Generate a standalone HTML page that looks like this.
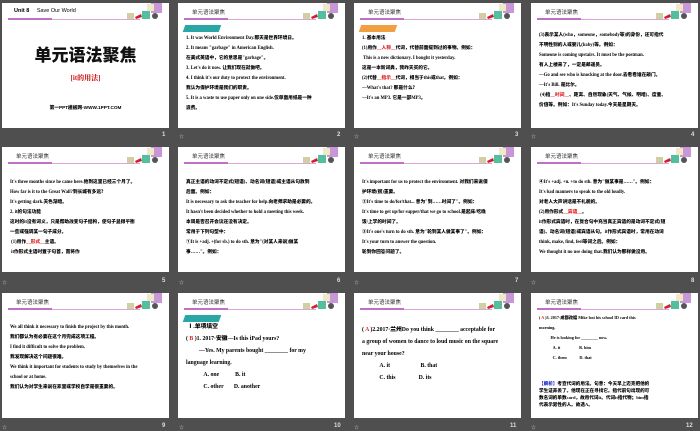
<!DOCTYPE html>
<html><head><meta charset="utf-8"><style>
*{margin:0;padding:0;box-sizing:border-box}
body{width:700px;height:431px;background:#4f4f4f;position:relative;overflow:hidden;font-family:"Liberation Serif","Noto Serif CJK SC",serif}
.s{position:absolute;width:167px;height:125px;background:#fff}
.h{position:absolute;left:14px;top:5px;font:5.5px "Liberation Sans","Noto Sans CJK SC",sans-serif;color:#333}
.l1{position:absolute;left:6px;top:16px;width:132px;height:1px;background:#d9a6d9}
.l2{position:absolute;left:6px;top:15px;width:44px;height:2px;background:#c070c8}
.ic{position:absolute;left:125px;top:0}
.n{position:absolute;color:#ddd;font:bold 6px "Liberation Sans",sans-serif}
.m{position:absolute;color:#bbb;font:5px "Noto Sans CJK SC",sans-serif}
.c{position:absolute;left:8px;right:6px;font-size:4.7px;font-weight:900;line-height:10px;color:#000;white-space:nowrap;font-family:"Liberation Serif","Noto Sans CJK SC",serif}
.r{color:#e02020}
.tag{position:absolute;left:6px;top:22px;width:36px;height:7px;background:#2aa6a6;transform:skewX(-20deg)}
</style></head><body>
<svg width="0" height="0" style="position:absolute"><defs><g id="ic"><rect x="24" y="0" width="11" height="10" fill="#c897d8"/><rect x="20" y="1" width="7" height="7" fill="#f3e8c6"/><rect x="0" y="10" width="7" height="6" fill="#cfcf9f"/><path d="M8 14l6-3 1 3-6 2z" fill="#d02030"/><rect x="15" y="8" width="8" height="8" fill="#52bfa0"/><circle cx="28" cy="13" r="3" fill="#555"/></g></defs></svg>

<div class="s" style="left:2px;top:3px">
<div style="position:absolute;left:12px;top:5px;font:bold 5.5px 'Liberation Sans',sans-serif">Unit 8 <span style="font-weight:normal;margin-left:6px">Save Our World</span></div>
<div class="l1"></div><div class="l2"></div><svg class="ic" width="40" height="18"><use href="#ic"/></svg>
<div style="position:absolute;left:0;right:0;top:38px;text-align:center;font:900 17px 'Noto Sans CJK SC',sans-serif;color:#111">单元语法聚焦</div>
<div style="position:absolute;left:0;right:0;top:70px;text-align:center;font:900 7px 'Liberation Serif','Noto Serif CJK SC',serif;color:#d02020">[it的用法]</div>
<div style="position:absolute;left:0;right:0;top:102px;text-align:center;font:900 4.7px 'Liberation Sans','Noto Sans CJK SC',sans-serif">第一PPT模板网-WWW.1PPT.COM</div>
</div><div class="n" style="left:162px;top:132px">1</div>

<div class="s" style="left:178px;top:3px"><div class="h">单元语法聚焦</div><div class="l1"></div><div class="l2"></div><svg class="ic" width="40" height="18"><use href="#ic"/></svg>
<div class="tag"></div>
<div class="c" style="top:31px">1. It was World Environment Day.那天是世界环境日。<br>2. It means "garbage" in American English.<br>在美式英语中，它的意思是"garbage"。<br>3. Let's do it now. 让我们现在就做吧。<br>4. I think it's our duty to protect the environment.<br>我认为保护环境是我们的职责。<br>5. It is a waste to use paper only on one side.仅单面用纸是一种<br>浪费。</div></div>
<div class="m" style="left:179px;top:133px">☆</div><div class="n" style="left:337px;top:132px">2</div>

<div class="s" style="left:354px;top:3px"><div class="h">单元语法聚焦</div><div class="l1"></div><div class="l2"></div><svg class="ic" width="40" height="18"><use href="#ic"/></svg>
<div class="tag" style="background:#f0a040"></div>
<div class="c" style="top:31px">1. 基本用法<br>(1)用作<span class="r">__人称__</span>代词，代替前面提到过的事物。例如：<br>&nbsp;This is a new dictionary. I bought it yesterday.<br>这是一本新词典，我昨天买的它。<br>(2)代替<span class="r">__指示__</span>代词，相当于this或that。例如：<br>—What's that? 那是什么？<br>—It's an MP3. 它是一部MP3。</div></div>
<div class="m" style="left:354px;top:133px">☆</div><div class="n" style="left:515px;top:132px">3</div>

<div class="s" style="left:531px;top:3px"><div class="h">单元语法聚焦</div><div class="l1"></div><div class="l2"></div><svg class="ic" width="40" height="18"><use href="#ic"/></svg>
<div class="c" style="top:28px">(3)表示某人(who，someone，somebody等)的身份，还可指代<br>不明性别的人或婴儿(baby)等。例如：<br>Someone is coming upstairs. It must be the postman.<br>有人上楼来了，一定是邮递员。<br>—Go and see who is knocking at the door.去看看谁在敲门。<br>—It's Bill. 是比尔。<br>&nbsp;(4)指<span class="r">__时间__</span>、距离、自然现象(天气、气候、明暗)、度量、<br>价值等。例如：It's Sunday today.今天是星期天。</div></div>
<div class="m" style="left:531px;top:133px">☆</div><div class="n" style="left:691px;top:132px">4</div>

<div class="s" style="left:2px;top:147px"><div class="h">单元语法聚焦</div><div class="l1"></div><div class="l2"></div><svg class="ic" width="40" height="18"><use href="#ic"/></svg>
<div class="c" style="top:31px">It's three months since he came here.他到这里已经三个月了。<br>How far is it to the Great Wall?到长城有多远？<br>It's getting dark.天色渐暗。<br>2. it的句法功能<br>这时的it没有词义，只是帮助改变句子结构，使句子显得平衡<br>一些或强调某一句子成分。<br>&nbsp;(1)用作<span class="r">__形式__</span>主语。<br>&nbsp;it作形式主语时置于句首，而将作</div></div>
<div class="m" style="left:2px;top:279px">☆</div><div class="n" style="left:162px;top:278px">5</div>

<div class="s" style="left:178px;top:147px"><div class="h">单元语法聚焦</div><div class="l1"></div><div class="l2"></div><svg class="ic" width="40" height="18"><use href="#ic"/></svg>
<div class="c" style="top:31px">真正主语的动词不定式(短语)、动名词(短语)或主语从句放到<br>后面。例如：<br>It is necessary to ask the teacher for help.向老师求助是必要的。<br>It hasn't been decided whether to hold a meeting this week.<br>本周是否召开会议还没有决定。<br>常用于下列句型中：<br>①It is +adj. +(for sb.) to do sth. 意为"(对某人来说)做某<br>事……"。例如：</div></div>
<div class="m" style="left:179px;top:279px">☆</div><div class="n" style="left:337px;top:278px">6</div>

<div class="s" style="left:354px;top:147px"><div class="h">单元语法聚焦</div><div class="l1"></div><div class="l2"></div><svg class="ic" width="40" height="18"><use href="#ic"/></svg>
<div class="c" style="top:31px">It's important for us to protect the environment. 对我们来说保<br>护环境(很)重要。<br>②It's time to do/for/that... 意为"到……时间了"。例如：<br>It's time to get up/for supper/that we go to school.是起床/吃晚<br>饭/上学的时间了。<br>③It's one's turn to do sth. 意为"轮到某人做某事了"。例如：<br>It's your turn to answer the question.<br>轮到你回答问题了。</div></div>
<div class="m" style="left:354px;top:279px">☆</div><div class="n" style="left:515px;top:278px">7</div>

<div class="s" style="left:531px;top:147px"><div class="h">单元语法聚焦</div><div class="l1"></div><div class="l2"></div><svg class="ic" width="40" height="18"><use href="#ic"/></svg>
<div class="c" style="top:31px">④It's +adj. +n. +to do sth. 意为"做某事是……"。例如：<br>It's bad manners to speak to the old loudly.<br>对老人大声讲话是不礼貌的。<br>(2)用作形式<span class="r">__宾语__</span>。<br>it作形式宾语时，在复合句中充当真正宾语的是动词不定式(短<br>语)、动名词(短语)或宾语从句。it作形式宾语时，常用在动词<br>think, make, find, feel等词之后。例如：<br>We thought it no use doing that.我们认为那样做没用。</div></div>
<div class="m" style="left:531px;top:279px">☆</div><div class="n" style="left:691px;top:278px">8</div>

<div class="s" style="left:2px;top:293px"><div class="h">单元语法聚焦</div><div class="l1"></div><div class="l2"></div><svg class="ic" width="40" height="18"><use href="#ic"/></svg>
<div class="c" style="top:30px">We all think it necessary to finish the project by this month.<br>我们都认为有必要在这个月完成这项工程。<br>I find it difficult to solve the problem.<br>我发现解决这个问题很难。<br>We think it important for students to study by themselves in the<br>school or at home.<br>我们认为对学生来说在家里或学校自学是很重要的。</div></div>
<div class="m" style="left:2px;top:424px">☆</div><div class="n" style="left:162px;top:423px">9</div>

<div class="s" style="left:178px;top:293px"><div class="h">单元语法聚焦</div><div class="l1"></div><div class="l2"></div><svg class="ic" width="40" height="18"><use href="#ic"/></svg>
<div class="tag"></div>
<div class="c" style="top:28px;font-size:5.8px;line-height:12px">&nbsp;Ⅰ.单项填空<br>( <span class="r">B</span> )1. 2017·安徽—Is this iPad yours?<br>&nbsp;&nbsp;&nbsp;&nbsp;&nbsp;&nbsp;&nbsp;&nbsp;&nbsp;—Yes. My parents bought ________ for my<br>language learning.<br>&nbsp;&nbsp;&nbsp;&nbsp;&nbsp;&nbsp;&nbsp;&nbsp;&nbsp;&nbsp;&nbsp;&nbsp;A. one&nbsp;&nbsp;&nbsp;&nbsp;&nbsp;&nbsp;&nbsp;&nbsp;&nbsp;&nbsp;&nbsp;B. it<br>&nbsp;&nbsp;&nbsp;&nbsp;&nbsp;&nbsp;&nbsp;&nbsp;&nbsp;&nbsp;&nbsp;&nbsp;C. other&nbsp;&nbsp;&nbsp;&nbsp;&nbsp;&nbsp;&nbsp;D. another</div></div>
<div class="m" style="left:179px;top:424px">☆</div><div class="n" style="left:334px;top:423px">10</div>

<div class="s" style="left:354px;top:293px"><div class="h">单元语法聚焦</div><div class="l1"></div><div class="l2"></div><svg class="ic" width="40" height="18"><use href="#ic"/></svg>
<div class="c" style="top:31px;font-size:5.8px;line-height:12px">( <span class="r">A</span> )2.2017·兰州Do you think ________ acceptable for<br>a group of women to dance to loud music on the square<br>near your house?<br>&nbsp;&nbsp;&nbsp;&nbsp;&nbsp;&nbsp;&nbsp;&nbsp;&nbsp;&nbsp;&nbsp;&nbsp;A. it&nbsp;&nbsp;&nbsp;&nbsp;&nbsp;&nbsp;&nbsp;&nbsp;&nbsp;&nbsp;&nbsp;&nbsp;&nbsp;&nbsp;&nbsp;&nbsp;&nbsp;&nbsp;&nbsp;&nbsp;&nbsp;B. that<br>&nbsp;&nbsp;&nbsp;&nbsp;&nbsp;&nbsp;&nbsp;&nbsp;&nbsp;&nbsp;&nbsp;&nbsp;C. this&nbsp;&nbsp;&nbsp;&nbsp;&nbsp;&nbsp;&nbsp;&nbsp;&nbsp;&nbsp;&nbsp;&nbsp;&nbsp;&nbsp;&nbsp;&nbsp;D. its</div></div>
<div class="m" style="left:354px;top:424px">☆</div><div class="n" style="left:510px;top:423px">11</div>

<div class="s" style="left:531px;top:293px"><div class="h">单元语法聚焦</div><div class="l1"></div><div class="l2"></div><svg class="ic" width="40" height="18"><use href="#ic"/></svg>
<div class="c" style="top:20px;font-size:4.2px;line-height:10px">( <span class="r">A</span> )3. 2017·成都改编 Mike lost his school ID card this<br>morning.<br>&nbsp;&nbsp;&nbsp;&nbsp;&nbsp;&nbsp;&nbsp;&nbsp;&nbsp;&nbsp;&nbsp;He is looking for ________ now.<br>&nbsp;&nbsp;&nbsp;&nbsp;&nbsp;&nbsp;&nbsp;&nbsp;&nbsp;&nbsp;&nbsp;&nbsp;&nbsp;A. it&nbsp;&nbsp;&nbsp;&nbsp;&nbsp;&nbsp;&nbsp;&nbsp;&nbsp;&nbsp;&nbsp;&nbsp;&nbsp;&nbsp;&nbsp;&nbsp;&nbsp;&nbsp;B. him<br>&nbsp;&nbsp;&nbsp;&nbsp;&nbsp;&nbsp;&nbsp;&nbsp;&nbsp;&nbsp;&nbsp;&nbsp;&nbsp;C. them&nbsp;&nbsp;&nbsp;&nbsp;&nbsp;&nbsp;&nbsp;&nbsp;&nbsp;&nbsp;&nbsp;&nbsp;D. that</div>
<div class="c" style="top:87px;font-size:4.6px;line-height:7px"><span style="color:#2030c0">【解析】</span>考查代词的用法。句意：今天早上迈克把他的<br>学生证弄丢了。他现在正在寻找它。指代前句出现的可<br>数名词的单数card，故用代词it。代词it指代物；him指<br>代表示男性的人。故选A。</div></div>
<div class="m" style="left:531px;top:424px">☆</div><div class="n" style="left:686px;top:423px">12</div>
</body></html>
